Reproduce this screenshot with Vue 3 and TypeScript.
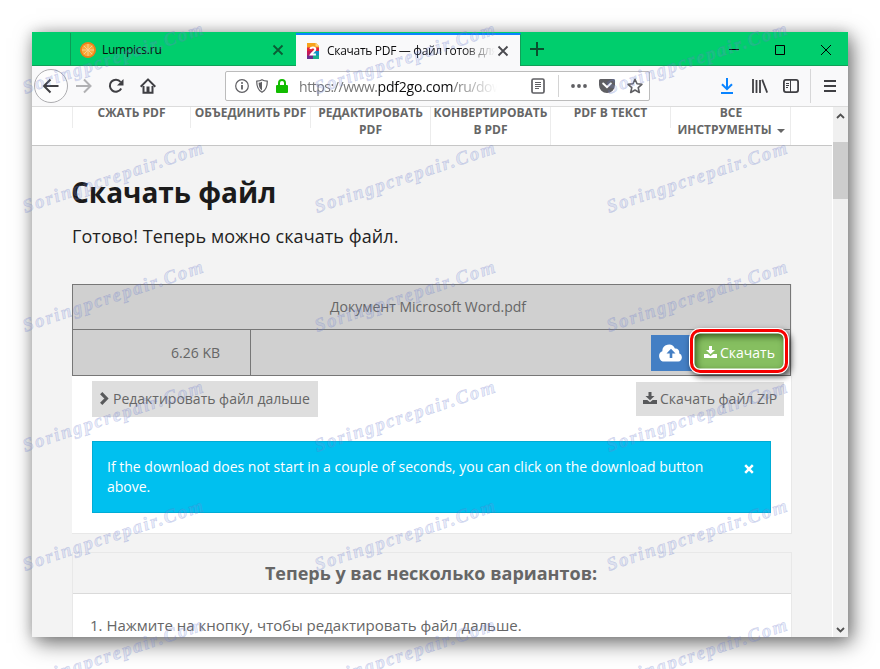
<script setup lang="ts">
interface NavItem {
  lines: string[]
  caret?: boolean
}

const navItems: NavItem[] = [
  { lines: ['СЖАТЬ PDF'] },
  { lines: ['ОБЪЕДИНИТЬ PDF'] },
  { lines: ['РЕДАКТИРОВАТЬ', 'PDF'] },
  { lines: ['КОНВЕРТИРОВАТЬ', 'В PDF'] },
  { lines: ['PDF В ТЕКСТ'] },
  { lines: ['ВСЕ', 'ИНСТРУМЕНТЫ'], caret: true },
]

const marks: { x: number; y: number }[] = []
for (let row = 0; row < 6; row++) {
  for (let col = 0; col < 3; col++) {
    marks.push({ x: 25 + col * 292, y: 94 + Math.round(row * 119.2) })
  }
}
</script>

<template>
  <div class="stage">
    <div class="window">
      <div class="tabbar">
        <div class="tab-spacer"></div>
        <div class="tab">
          <svg class="fav" width="16" height="16" viewBox="0 0 16 16">
            <circle cx="8" cy="8" r="7.8" fill="#f08a1d" />
            <circle cx="8" cy="8" r="6.3" fill="#f9a93a" />
            <path d="M8 2v12M2 8h12M3.800 3.800l8.400 8.400M12.200 3.800l-8.400 8.400" stroke="#fbd08c" stroke-width="1" />
            <circle cx="8" cy="8" r="7.200" fill="none" stroke="#ee7c1b" stroke-width="1.200" />
          </svg>
          <span class="tab-title t-lump">Lumpics.ru</span>
          <svg class="tab-x" width="12" height="12" viewBox="0 0 12 12"><path d="M1.500 1.500l9 9M10.500 1.500l-9 9" stroke="#0a5c35" stroke-width="1.800" fill="none" /></svg>
        </div>
        <div class="tab active">
          <svg class="fav" width="16" height="16" viewBox="0 0 16 16">
            <path d="M2 0h9l3 3v5H2z" fill="#f6a21c" />
            <path d="M10.500 0h.5l3 3v.5h-3.500z" fill="#ffd27a" />
            <path d="M2 4.500h12v4H2z" fill="#e2233d" />
            <path d="M2 8h6v5H2z" fill="#c2185b" /><path d="M8 8h6v5H8z" fill="#0f8fc4" />
            <path d="M2 12.500h6V16H2z" fill="#6a2c91" /><path d="M8 12.500h6V16H8z" fill="#1bb08a" />
            <path d="M5.300 6c.5-1.800 5-2 5 .3 0 1.900-2.900 2.900-4.400 5.200h5" fill="none" stroke="#fff" stroke-width="2" />
          </svg>
          <span class="tab-title t-pdf">Скачать PDF — файл готов для</span>
          <svg class="tab-x" width="12" height="12" viewBox="0 0 12 12"><path d="M1.500 1.500l9 9M10.500 1.500l-9 9" stroke="#4a4a4f" stroke-width="1.800" fill="none" /></svg>
        </div>
        <svg class="plus" width="14" height="14" viewBox="0 0 14 14"><path d="M7 0v14M0 7h14" stroke="#0a4f2e" stroke-width="2" /></svg>
        <div class="controls">
          <svg width="12" height="12" viewBox="0 0 12 12"><path d="M1 5.500h10" stroke="#000" /></svg>
          <svg width="12" height="12" viewBox="0 0 12 12"><path d="M1.500 1.500h9v9h-9z" stroke="#000" fill="none" /></svg>
          <svg width="12" height="12" viewBox="0 0 12 12"><path d="M1 1l10 10M11 1L1 11" stroke="#000" fill="none" /></svg>
        </div>
      </div>

      <div class="toolbar">
        <div class="back">
          <svg width="18" height="16" viewBox="0 0 18 16"><path d="M16.500 8H2.500M8.500 1.500L2 8l6.500 6.500" fill="none" stroke="#3f3f43" stroke-width="2" /></svg>
        </div>
        <svg class="fwd" width="16" height="16" viewBox="0 0 16 16"><path d="M0 8h14M8 1.500L14.500 8 8 14.500" fill="none" stroke="#b1b1b3" stroke-width="2" /></svg>
        <svg class="reload" width="16" height="16" viewBox="0 0 16 16"><path d="M13.200 10.500A6 6 0 1 1 12.600 4" fill="none" stroke="#3f3f43" stroke-width="2" /><path d="M15.500 1v6.500H9z" fill="#3f3f43" /></svg>
        <svg class="home" width="16" height="16" viewBox="0 0 16 16"><path d="M.7 8.700L8 1.400l7.300 7.300" fill="none" stroke="#3f3f43" stroke-width="2" stroke-linejoin="round" /><path d="M3.500 8v6.800h9V8" fill="none" stroke="#3f3f43" stroke-width="2" /><path d="M6.500 8.500h3V15h-3z" fill="#3f3f43" /></svg>

        <div class="urlbar">
          <svg class="info" width="14" height="14" viewBox="0 0 14 14"><circle cx="7" cy="7" r="6.300" fill="none" stroke="#5f5f63" stroke-width="1.200" /><path d="M7 6v4.500" stroke="#5f5f63" stroke-width="1.800" /><circle cx="7" cy="3.900" r="1" fill="#5f5f63" /></svg>
          <svg class="shield" width="12" height="14" viewBox="0 0 12 14"><path d="M6 .7c1.500 1 3.200 1.400 5.300 1.500 0 5-1 8.800-5.300 11.100C1.700 11 .7 7.200.7 2.200 2.800 2.100 4.500 1.700 6 .7z" fill="none" stroke="#5f5f63" stroke-width="1.200" /><path d="M6 2.700v8.700C3.400 9.500 2.700 7 2.600 3.700 3.900 3.600 5 3.300 6 2.700z" fill="#5f5f63" /></svg>
          <svg class="lock" width="12" height="14" viewBox="0 0 12 14"><path d="M3 7V4a3 3 0 0 1 6 0v3" fill="none" stroke="#12bc00" stroke-width="2" /><rect x="0" y="6" width="12" height="8" rx="1" fill="#12bc00" /></svg>
          <span class="url">https://www.<b>pdf2go.com</b>/ru/dow</span>
          <svg class="reader" width="14" height="16" viewBox="0 0 14 16"><rect x="1" y="1" width="12" height="14" rx="1.500" fill="none" stroke="#5f5f63" stroke-width="1.700" /><path d="M4 4.500h6M4 6.500h6M4 8.500h6M4 10.500h4" stroke="#5f5f63" /></svg>
          <span class="sep"></span>
          <svg class="dots" width="16" height="4" viewBox="0 0 16 4"><circle cx="2" cy="2" r="1.900" fill="#5f5f63" /><circle cx="8" cy="2" r="1.900" fill="#5f5f63" /><circle cx="14" cy="2" r="1.900" fill="#5f5f63" /></svg>
          <svg class="pocket" width="16" height="14" viewBox="0 0 16 14"><path d="M1.500 0h13A1.500 1.500 0 0 1 16 1.500V6a8 8 0 0 1-16 0V1.500A1.500 1.500 0 0 1 1.500 0z" fill="#5f5f63" /><path d="M4.200 4.500L8 8.200l3.800-3.700" fill="none" stroke="#fff" stroke-width="2" stroke-linecap="round" /></svg>
          <svg class="star" width="16" height="16" viewBox="0 0 16 16"><path d="M8 1.300l2 4.500 4.900.5-3.700 3.300 1.100 4.900L8 12l-4.300 2.500 1.100-4.900L1.100 6.300 6 5.800z" fill="none" stroke="#5f5f63" stroke-width="1.600" stroke-linejoin="round" /></svg>
        </div>

        <svg class="dl" width="14" height="16" viewBox="0 0 14 16"><path d="M7 0v11M2 6.200l5 5 5-5" fill="none" stroke="#0a84ff" stroke-width="2" /><path d="M1 15h12" stroke="#0a84ff" stroke-width="2" /></svg>
        <svg class="lib" width="16" height="14" viewBox="0 0 16 14"><path d="M1 0v14M4.500 1v13M8 1v13M10.200.6l5 13" stroke="#3f3f43" stroke-width="1.800" fill="none" /></svg>
        <svg class="side" width="16" height="14" viewBox="0 0 16 14"><rect x=".9" y=".9" width="14.200" height="12.200" rx="2" fill="none" stroke="#3f3f43" stroke-width="1.800" /><path d="M7.500 1v12" stroke="#3f3f43" /><path d="M3 4.500h3M3 6.500h3M3 8.500h2" stroke="#3f3f43" /></svg>
        <span class="sep2"></span>
        <svg class="menu" width="12" height="12" viewBox="0 0 12 12"><path d="M0 1h12M0 6h12M0 11h12" stroke="#3f3f43" stroke-width="2" /></svg>
      </div>

      <div class="viewport">
        <div class="page">
          <nav class="nav">
            <div v-for="(item, i) in navItems" :key="i" class="nav-item">
              <div v-for="line in item.lines" :key="line" class="nav-line">
                <span>{{ line }}</span><i v-if="item.caret && line === 'ИНСТРУМЕНТЫ'" class="caret"></i>
              </div>
            </div>
          </nav>

          <main class="content">
            <h1>Скачать файл</h1>
            <p class="lead">Готово! Теперь можно скачать файл.</p>

            <section class="card">
              <div class="file">
                <div class="file-name"><span>Документ Microsoft Word.pdf</span></div>
                <div class="file-row">
                  <div class="size">6.26 KB</div>
                  <div class="actions">
                    <div class="cloud">
                      <svg width="24" height="18" viewBox="0 0 24 18"><path d="M5.600 17.600A5.400 5.400 0 0 1 3.300 7.300 6.600 6.600 0 0 1 15.900 4.500a3.700 3.700 0 0 1 4.200 4.700 4.400 4.400 0 0 1-.8 8.400z" fill="#fff" /><path d="M12 4.800l4.500 4.700h-3.200V14h-2.600V9.500H7.500z" fill="#447fc4" /></svg>
                    </div>
                    <div class="ring">
                      <div class="green">
                        <svg width="13" height="12" viewBox="0 0 13 12"><path d="M5 0h3v4h3L6.500 8.300 2 4h3z" fill="#fff" /><path d="M0 8h3.800l2.700 2.200L9.200 8H13v4H0z" fill="#fff" /></svg>
                        <span>Скачать</span>
                      </div>
                    </div>
                  </div>
                </div>
              </div>

              <div class="btn-row">
                <div class="btn edit">
                  <svg width="9" height="13" viewBox="0 0 9 13"><path d="M1.200 1.200l5.200 5.300-5.200 5.300" fill="none" stroke="#58595b" stroke-width="3.200" /></svg>
                  <span>Редактировать файл дальше</span>
                </div>
                <div class="btn zip">
                  <svg width="14" height="12" viewBox="0 0 14 12"><path d="M5.500 0h3v4h3L7 8.300 2.500 4h3z" fill="#58595b" /><path d="M0 8h4.300L7 10.200 9.700 8H14v4H0z" fill="#58595b" /></svg>
                  <span>Скачать файл ZIP</span>
                </div>
              </div>

              <div class="alert">
                <div class="alert-text">If the download does not start in a couple of seconds, you can click on the download button<br />above.</div>
                <svg width="10" height="10" viewBox="0 0 10 10"><path d="M1.200 1.200l7.600 7.600M8.800 1.200L1.200 8.800" stroke="#fff" stroke-width="2.500" /></svg>
              </div>
            </section>

            <section class="options">
              <h2><span>Теперь у вас несколько вариантов:</span></h2>
              <div class="step">1. Нажмите на кнопку, чтобы редактировать файл дальше.</div>
            </section>
          </main>
        </div>

        <div class="scrollbar">
          <svg width="9" height="6" viewBox="0 0 9 6"><path d="M1 5l3.500-3.500L8 5" fill="none" stroke="#505050" stroke-width="1.800" /></svg>
          <div class="thumb"></div>
          <svg class="down" width="9" height="6" viewBox="0 0 9 6"><path d="M1 1l3.500 3.500L8 1" fill="none" stroke="#505050" stroke-width="1.800" /></svg>
        </div>
      </div>
    </div>

    <svg class="marks" width="880" height="669" viewBox="0 0 880 669">
      <text v-for="(m, i) in marks" :key="i" :transform="`translate(${m.x} ${m.y}) rotate(-18.500)`" textLength="189" lengthAdjust="spacing">Soringpcrepair.Com</text>
    </svg>
  </div>
</template>

<style>
body {
  background: #fff;
  overflow: hidden;
}
</style>

<style scoped>
* {
  box-sizing: border-box;
}
svg {
  display: block;
  flex: none;
}
.stage {
  position: relative;
  width: 880px;
  height: 669px;
  padding: 32px;
  overflow: hidden;
  background: #fff;
  font-family: 'Open Sans', 'Noto Sans', sans-serif;
  color: #666;
}
.window {
  width: 816px;
  height: 605px;
  display: flex;
  flex-direction: column;
  overflow: hidden;
  background: #f3f3f3;
  box-shadow: 4px 6px 20px rgba(0, 0, 0, 0.55), 0 0 12px rgba(0, 0, 0, 0.15);
}
.tabbar {
  height: 34px;
  flex: none;
  display: flex;
  background: #00ce6d;
  box-shadow: inset 0 -1px #10a058;
}
.tab-spacer {
  width: 39px;
  margin-top: 1px;
  border-right: 1px solid #0c9b57;
}
.tab {
  width: 225px;
  display: flex;
  align-items: center;
  padding: 2px 12px 0 9px;
}
.tab.active {
  margin-top: 1px;
  width: 225px;
  padding: 0 11px 0 9px;
  background: #f9f9fa;
  border-top: 2px solid #0a84ff;
  border-right: 1px solid #10a058;
}
.tab-title {
  margin-left: 6px;
  flex: 1;
  font-size: 12px;
  line-height: 20px;
  white-space: nowrap;
  overflow: hidden;
  color: #0c0c0d;
}
.t-lump {
  letter-spacing: -0.25px;
}
.t-pdf {
  letter-spacing: -0.3px;
  -webkit-mask-image: linear-gradient(90deg, #000 135px, transparent 168px);
  mask-image: linear-gradient(90deg, #000 135px, transparent 168px);
}
.plus {
  margin: 10px 0 0 9px;
}
.controls {
  display: flex;
  gap: 34px;
  margin: 12px 16px 0 auto;
}
.toolbar {
  height: 41px;
  flex: none;
  display: flex;
  align-items: center;
  padding-left: 2px;
  background: #f9f9fa;
  border-bottom: 1px solid #dcdcdc;
}
.back {
  width: 34px;
  height: 34px;
  border: 1px solid #adadb0;
  border-radius: 50%;
  background: #fdfdfd;
  display: flex;
  align-items: center;
  justify-content: center;
}
.fwd { margin-left: 8px; }
.reload { margin-left: 16px; }
.home { margin-left: 16px; }
.urlbar {
  width: 425px;
  height: 30px;
  margin-left: 69px;
  display: flex;
  align-items: center;
  border: 1px solid #bcbcbc;
  border-radius: 2px;
  background: #fff;
  padding-left: 9px;
}
.shield { margin-left: 7px; }
.lock { margin-left: 8px; }
.url {
  width: 200px;
  margin-left: 11px;
  margin-top: 1px;
  font-size: 14px;
  line-height: 22px;
  letter-spacing: -0.45px;
  white-space: nowrap;
  overflow: hidden;
  color: #777;
  -webkit-mask-image: linear-gradient(90deg, #000 155px, transparent 198px);
  mask-image: linear-gradient(90deg, #000 155px, transparent 198px);
}
.url b {
  font-weight: 400;
  letter-spacing: -0.2px;
  color: #0c0c0d;
}
.reader { margin-left: 32px; }
.sep {
  width: 1px;
  height: 22px;
  margin-left: 13px;
  background: #d4d4d4;
}
.dots { margin-left: 12px; }
.pocket { margin-left: 12px; }
.star { margin-left: 12px; }
.dl { margin-left: 70px; }
.lib { margin-left: 18px; }
.side { margin-left: 15px; }
.sep2 {
  width: 1px;
  height: 34px;
  margin-left: 11px;
  background: #d7d7d8;
}
.menu { margin-left: 13px; }

.viewport {
  flex: 1;
  min-height: 0;
  display: flex;
}
.page {
  width: 800px;
  overflow: hidden;
}
.nav {
  height: 39px;
  display: flex;
  align-items: flex-start;
  padding-left: 39px;
  background: #fff;
  border-bottom: 1px solid #c6c6c6;
}
.nav-item {
  width: 120px;
  padding-bottom: 7px;
  border-right: 1px solid #ececec;
  text-align: center;
  font-size: 12px;
  font-weight: 700;
  line-height: 17px;
  margin-top: -3px;
}
.nav-item:first-child {
  width: 119px;
  border-left: 1px solid #ececec;
  margin-left: 1px;
}
.nav-item:last-child {
  padding-left: 1px;
}
.nav-line {
  white-space: nowrap;
  display: flex;
  justify-content: center;
  align-items: center;
}
.caret {
  margin: 2px 0 0 5px;
  border: 4px solid transparent;
  border-top-color: #666;
  border-bottom: 0;
}
.content {
  padding: 24px 41px 0 40px;
}
h1 {
  margin: 0 0 0 -1px;
  font-size: 28px;
  line-height: 44px;
  font-weight: 700;
  color: #1b1b1b;
}
.lead {
  margin: 10px 0 36px;
  font-size: 18px;
  line-height: 24px;
  letter-spacing: 0.08px;
  color: #222;
}
.card {
  width: 720px;
  height: 250px;
  margin-bottom: 18px;
  background: #fff;
  border: solid #e8e8e8;
  border-width: 0 1px 1px 0;
}
.file {
  width: 719px;
  height: 92px;
  border: 1px solid #777;
  background: #d0d0d0;
  font-size: 14px;
}
.file-name {
  height: 45px;
  line-height: 44px;
  border-bottom: 1px solid #777;
  padding-right: 7px;
  text-align: center;
}
.file-row {
  height: 45px;
  display: flex;
}
.size {
  width: 178px;
  padding-right: 30px;
  border-right: 1px solid #777;
  text-align: right;
  line-height: 45px;
}
.actions {
  flex: 1;
  display: flex;
  justify-content: flex-end;
  padding-right: 1px;
}
.cloud {
  width: 41px;
  height: 36px;
  margin-top: 5px;
  padding: 9px 0 0 8px;
  background: #447fc4;
}
.ring {
  width: 100px;
  height: 46px;
  margin: -2px 0 0 -3px;
  padding: 1px;
  flex: none;
  border-radius: 11px;
  background: #fff;
  box-shadow: 2px 3px 6px rgba(0, 0, 0, 0.65);
  position: relative;
}
.green {
  height: 44px;
  display: flex;
  align-items: center;
  padding: 2px 0 0 10px;
  gap: 4px;
  border: 3px solid #f70000;
  border-radius: 10px;
  background: #86bf60;
  background-clip: padding-box;
  box-shadow: inset 0 0 0 1.5px #fff, inset 2px 3px 7px 1px rgba(20, 50, 0, 0.75);
  color: #fff;
}
.green svg {
  margin-left: 1px;
  margin-right: -1px;
}
.btn-row {
  display: flex;
  justify-content: space-between;
  align-items: center;
  padding: 5px 7px 0 20px;
}
.btn {
  display: flex;
  align-items: center;
  background: #dedede;
  font-size: 14px;
  white-space: nowrap;
  padding-bottom: 2px;
}
.edit {
  width: 226px;
  height: 36px;
  padding-left: 8px;
  gap: 4px;
}
.zip {
  width: 148px;
  height: 34px;
  padding-left: 7px;
  gap: 3px;
}
.alert {
  width: 679px;
  height: 72px;
  margin: 24px 0 0 20px;
  padding: 15px 16px 0 14px;
  display: flex;
  justify-content: space-between;
  border: 1px solid #00acd6;
  background: #00c0ef;
  color: #fff;
  font-size: 14px;
  line-height: 20px;
  white-space: nowrap;
}
.alert svg {
  margin-top: 7px;
}
.options {
  width: 720px;
  height: 100px;
  background: #fff;
  border: 1px solid #e8e8e8;
}
h2 {
  height: 41px;
  margin: 0;
  padding-right: 2px;
  text-align: center;
  background: #f3f3f3;
  border-bottom: 1px solid #dadada;
  font-size: 18px;
  line-height: 41px;
}
.step {
  padding: 19px 0 0 17px;
  font-size: 15px;
  line-height: 24px;
  white-space: nowrap;
}
.scrollbar {
  width: 16px;
  display: flex;
  flex-direction: column;
  align-items: center;
  padding: 6px 1px 4px 0;
  background: #f0f0f0;
  border-left: 1px solid #fff;
}
.thumb {
  width: 15px;
  height: 57px;
  flex: none;
  margin-top: 23px;
  margin-right: -1px;
  background: #cdcdcd;
}
.down {
  margin-top: auto;
}
.marks {
  position: absolute;
  left: 0;
  top: 0;
  pointer-events: none;
}
.marks text {
  font: italic 700 19px 'Liberation Serif', serif;
  fill: rgba(130, 150, 225, 0.2);
  stroke: rgba(95, 110, 190, 0.24);
  stroke-width: 0.7px;
}
</style>
